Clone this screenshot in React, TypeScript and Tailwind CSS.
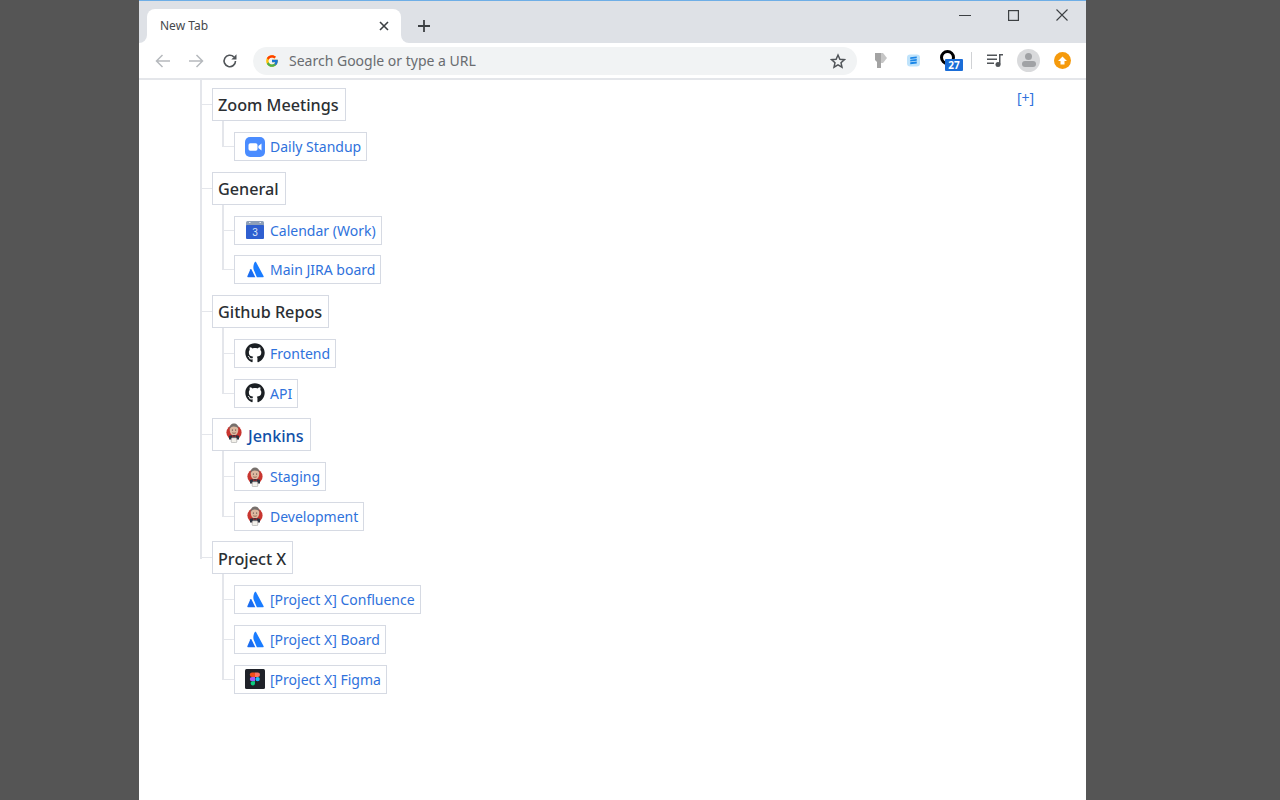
import {FaGithub} from "react-icons/fa";
import {FcGoogle} from "react-icons/fc";

const ZoomIcon = () => (
  <svg width="20" height="20" viewBox="0 0 20 20">
    <rect width="20" height="20" rx="5" fill="#4a8cff" />
    <rect x="3.5" y="6.2" width="9" height="7.6" rx="1.8" fill="#fff" />
    <path d="M13.4 9 L16.5 6.6 V13.4 L13.4 11 Z" fill="#fff" />
  </svg>
);

const CalendarIcon = () => (
  <svg width="20" height="20" viewBox="0 0 20 20">
    <path d="M1 2.5 Q1 1 2.5 1 H17.5 Q19 1 19 2.5 V6 H1 Z" fill="#8d9fb8" />
    <rect x="1" y="5" width="18" height="14" rx="1" fill="#2f5fd0" />
    <rect x="4" y="2" width="1.5" height="1" fill="#e6e9ef" />
    <rect x="14.5" y="2" width="1.5" height="1" fill="#e6e9ef" />
    <text x="10" y="16" textAnchor="middle" fontSize="10" fontFamily="Liberation Sans, sans-serif" fill="#dfe7f7">
      3
    </text>
  </svg>
);

const AtlassianIcon = () => (
  <svg width="17" height="17" viewBox="0 0 20 20">
    <path d="M4 9.8 C4.4 9.3 5 9.4 5.3 9.9 L9.8 19 H1 C0.5 19 0.2 18.5 0.4 18 Z" fill="#1a6cf0" />
    <path d="M9.3 1.2 C9.7 0.6 10.3 0.6 10.6 1.2 L19.6 18 C19.8 18.5 19.5 19 19 19 H11.6 L8 10.5 C6.9 8 7.6 3.5 9.3 1.2 Z" fill="#1a7cff" />
  </svg>
);

const GithubIcon = () => <FaGithub size={20} color="#1b1f23" />;

const JenkinsIcon = () => (
  <svg width="20" height="20" viewBox="0 0 20 20">
    <circle cx="10" cy="9.5" r="7.6" fill="#c8352f" />
    <ellipse cx="10" cy="7" rx="4.3" ry="5.6" fill="#dcb8a0" />
    <path d="M5.6 6.5 C5.2 2.5 7.5 0.6 10 0.6 C12.5 0.6 14.8 2.5 14.4 6 C13.4 4 11.5 3.4 9.5 3.5 C7.8 3.6 6.4 4.6 5.6 6.5 Z" fill="#77706c" />
    <circle cx="8.4" cy="7" r="0.6" fill="#3b3232" />
    <circle cx="11.6" cy="7" r="0.6" fill="#3b3232" />
    <path d="M8.2 9.8 Q10 10.8 11.8 9.8" stroke="#7a4a3a" strokeWidth="0.7" fill="none" />
    <path d="M5 12.8 Q10 11.2 15 12.8 V16.5 H5 Z" fill="#2c3440" />
    <path d="M8.2 12 L10 13.2 L11.8 12 V14.4 L10 13.2 L8.2 14.4 Z" fill="#b02a2a" />
    <rect x="7.2" y="14.8" width="5.6" height="4.8" rx="1" fill="#f2f0ea" stroke="#8b8b8b" strokeWidth="0.5" />
  </svg>
);

const FigmaIcon = () => (
  <svg width="20" height="20" viewBox="0 0 20 20">
    <rect width="20" height="20" rx="1.5" fill="#1f2229" />
    <path d="M10 3.5 H7 A2.2 2.2 0 0 0 7 7.9 H10 Z" fill="#f24e1e" />
    <path d="M10 3.5 H12.8 A2.2 2.2 0 0 1 12.8 7.9 H10 Z" fill="#ff7262" />
    <path d="M10 7.9 H7 A2.2 2.2 0 0 0 7 12.3 H10 Z" fill="#a259ff" />
    <circle cx="12.6" cy="10.1" r="2.2" fill="#1abcfe" />
    <path d="M7 12.3 H10 V14.5 A2.2 2.2 0 1 1 7 12.3 Z" fill="#0acf83" />
  </svg>
);

interface ChildProps {
  label: string;
  icon: React.ReactNode;
}

const Child = ({label, icon, first}: ChildProps & {first: boolean}) => (
  <li className="relative mb-[10.65px] flex">
    <span
      className={`absolute -left-[12px] w-[2px] bg-[#e4e6eb] ${
        first ? "-top-[11px] h-[26px]" : "-top-[26px] h-[41px]"
      }`}
    />
    <span className="absolute -left-[10px] top-[14px] h-px w-[10px] bg-[#e4e6eb]" />
    <a className="flex h-[29px] items-center border border-[#d6dae3] pl-[10px] pr-[5px] text-[14px] text-[#2f72dc]">
      <span className="mr-[5px] flex h-5 w-5 items-center justify-center">{icon}</span>
      {label}
    </a>
  </li>
);

interface GroupProps {
  title: string;
  items: ChildProps[];
}

const Group = ({title, items}: GroupProps) => (
  <li className="relative">
    <span className="absolute -left-[11px] top-[16px] h-px w-[11px] bg-[#e4e6eb]" />
    <div className="mb-[11px] flex">
      <div className="flex h-[33px] items-center border border-[#d6dae3] pl-[5px] pr-[6px] pt-[2px] text-[16.2px] font-medium text-[#2b2f33]">
        {title}
      </div>
    </div>
    <ul className="ml-[22px]">
      {items.map((item, i) => (
        <Child key={item.label} first={i === 0} {...item} />
      ))}
    </ul>
  </li>
);

const groups: GroupProps[] = [
  {title: "Zoom Meetings", items: [{label: "Daily Standup", icon: <ZoomIcon />}]},
  {
    title: "General",
    items: [
      {label: "Calendar (Work)", icon: <CalendarIcon />},
      {label: "Main JIRA board", icon: <AtlassianIcon />},
    ],
  },
  {
    title: "Github Repos",
    items: [
      {label: "Frontend", icon: <GithubIcon />},
      {label: "API", icon: <GithubIcon />},
    ],
  },
];

const groupsAfter: GroupProps[] = [
  {
    title: "Project X",
    items: [
      {label: "[Project X] Confluence", icon: <AtlassianIcon />},
      {label: "[Project X] Board", icon: <AtlassianIcon />},
      {label: "[Project X] Figma", icon: <FigmaIcon />},
    ],
  },
];

const TabBar = () => (
  <div className="flex h-[42px] items-end bg-[#dee1e6] pl-2">
    <div className="relative flex h-[34px] w-[254px] items-center justify-between rounded-t-lg bg-white pl-[13px] pr-[12px]">
      <span className="absolute -left-2 bottom-0 h-2 w-2 bg-white">
        <span className="block h-2 w-2 rounded-br-lg bg-[#dee1e6]" />
      </span>
      <span className="absolute -right-2 bottom-0 h-2 w-2 bg-white">
        <span className="block h-2 w-2 rounded-bl-lg bg-[#dee1e6]" />
      </span>
      <span className="text-xs text-[#45484c]">New Tab</span>
      <svg width="10" height="10" viewBox="0 0 10 10" stroke="#3c4043" strokeWidth="1.6">
        <path d="M1 1 L9 9 M9 1 L1 9" />
      </svg>
    </div>
    <svg className="mb-[11px] ml-[17px]" width="12" height="12" viewBox="0 0 12 12" stroke="#3c4043" strokeWidth="1.8">
      <path d="M6 0 V12 M0 6 H12" />
    </svg>
    <div className="mb-[22px] ml-auto flex items-center">
      <svg className="mr-[37px]" width="12" height="12" viewBox="0 0 12 12" stroke="#3c4043">
        <path d="M0 6.5 H12" />
      </svg>
      <svg className="mr-[37px]" width="11" height="11" viewBox="0 0 11 11" stroke="#3c4043" strokeWidth="1.2" fill="none">
        <rect x="0.6" y="0.6" width="9.8" height="9.8" />
      </svg>
      <svg className="mr-[18px]" width="12" height="12" viewBox="0 0 12 12" stroke="#3c4043" strokeWidth="1.1">
        <path d="M0.5 0.5 L11.5 11.5 M11.5 0.5 L0.5 11.5" />
      </svg>
    </div>
  </div>
);

const Toolbar = () => (
  <div className="flex h-[37px] items-center border-b-2 border-[#e4e6ea] bg-white">
    <svg className="ml-[16px]" width="15" height="14" viewBox="0 0 15 14" stroke="#b6b9bd" strokeWidth="1.5" fill="none">
      <path d="M15 7 H1.5 M7.5 1 L1.5 7 L7.5 13" />
    </svg>
    <svg className="ml-[19px]" width="15" height="14" viewBox="0 0 15 14" stroke="#b6b9bd" strokeWidth="1.5" fill="none">
      <path d="M0 7 H13.5 M7.5 1 L13.5 7 L7.5 13" />
    </svg>
    <svg className="ml-[18px]" width="16" height="16" viewBox="0 0 16 16" fill="none">
      <path d="M13.5 8 A5.7 5.7 0 1 1 11.8 3.9" stroke="#505458" strokeWidth="1.6" />
      <path d="M14.5 1.2 V6.4 H9.3 Z" fill="#505458" />
    </svg>
    <div className="ml-[15px] flex h-7 w-[604px] items-center rounded-full bg-[#f1f3f4] pl-3 pr-[11px]">
      <FcGoogle size={14} />
      <span className="ml-[10px] text-sm text-[#696c70]">Search Google or type a URL</span>
      <svg className="ml-auto" width="16" height="16" viewBox="0 0 24 24" fill="none" stroke="#505458" strokeWidth="2.2">
        <path d="M12 3 L14.8 9.3 L21.6 10 L16.5 14.6 L18 21.3 L12 17.8 L6 21.3 L7.5 14.6 L2.4 10 L9.2 9.3 Z" />
      </svg>
    </div>
    <svg className="ml-[18px]" width="12" height="15" viewBox="0 0 12 15">
      <path d="M0 0 H6 V15 H2 V9 L0 7 Z" fill="#a3a3a3" />
      <path d="M6 0 H8 L12 5 L8 10 H6 Z" fill="#c6c6c6" />
    </svg>
    <svg className="ml-[20px]" width="13" height="13" viewBox="0 0 14 14">
      <rect x="0" y="0.5" width="14" height="13" rx="3.5" fill="#bfe3fb" />
      <path d="M3.5 3.4 L10.5 2.6 V4.6 L3.5 5.4 Z M3.5 6.2 L10.5 5.4 V7.4 L3.5 8.2 Z M3.5 9 L10.5 8.2 V10.2 L3.5 11 Z" fill="#1a86e8" />
    </svg>
    <div className="relative ml-[20px] h-[21px] w-[23px]">
      <span className="absolute left-0 top-0 h-[15px] w-[15px] rounded-full border-[3px] border-black" />
      <span className="absolute bottom-0 left-[5px] flex h-[12px] w-[18px] items-center justify-center rounded-[1px] bg-[#1a6dd8] text-[10px] font-bold leading-none text-white">
        27
      </span>
    </div>
    <span className="ml-[8px] h-[17px] w-px bg-[#d0d2d5]" />
    <svg className="ml-[15px]" width="16" height="13" viewBox="0 0 16 13" fill="#505458">
      <rect x="0" y="0.5" width="10" height="1.5" />
      <rect x="0" y="4.5" width="10" height="1.5" />
      <rect x="0" y="8.5" width="7" height="1.5" />
      <rect x="12" y="0.5" width="1.5" height="10" />
      <rect x="12" y="0" width="4" height="1.5" />
      <circle cx="11" cy="10.5" r="2.5" />
    </svg>
    <div className="ml-[14px] flex h-[23px] w-[23px] flex-col items-center overflow-hidden rounded-full bg-[#d9dadc]">
      <span className="mt-1 h-[7px] w-[7px] rounded-full bg-[#a0a2a5]" />
      <span className="mt-px h-[6px] w-[14px] rounded-full bg-[#a0a2a5]" />
    </div>
    <div className="ml-[14px] flex h-[17px] w-[17px] items-center justify-center rounded-full bg-[#f59a0c]">
      <svg width="9" height="9" viewBox="0 0 9 9" fill="#fff">
        <path d="M4.5 0.5 L9 5 H6.5 V8.5 H2.5 V5 H0 Z" />
      </svg>
    </div>
  </div>
);

const App = () => (
  <div className="flex h-[800px] w-[1280px] overflow-hidden bg-[#555555] pl-[139px] font-['Noto_Sans',sans-serif]">
    <div className="h-full w-[947px] border-t border-[#6eaee6] bg-white">
      <TabBar />
      <Toolbar />
      <div className="relative pl-[73px] pt-2">
        <span className="absolute left-[61px] top-0 h-[479px] w-[2px] bg-[#e4e6eb]" />
        <a className="absolute left-[878px] top-[8px] text-sm text-[#2f72dc]">[+]</a>
        <ul>
          {groups.map((group) => (
            <Group key={group.title} {...group} />
          ))}
          <li className="relative">
            <span className="absolute -left-[11px] top-[16px] h-px w-[11px] bg-[#e4e6eb]" />
            <div className="mb-[11px] flex">
              <a className="flex h-[33px] items-center border border-[#d6dae3] pl-[11px] pr-[6px] pt-[2px] text-[16.2px] font-medium text-[#1050a8]">
                <span className="mb-[5px] mr-[4px] flex h-5 w-5">
                  <JenkinsIcon />
                </span>
                Jenkins
              </a>
            </div>
            <ul className="ml-[22px]">
              <Child first label="Staging" icon={<JenkinsIcon />} />
              <Child first={false} label="Development" icon={<JenkinsIcon />} />
            </ul>
          </li>
          {groupsAfter.map((group) => (
            <Group key={group.title} {...group} />
          ))}
        </ul>
      </div>
    </div>
  </div>
);

export default App;
